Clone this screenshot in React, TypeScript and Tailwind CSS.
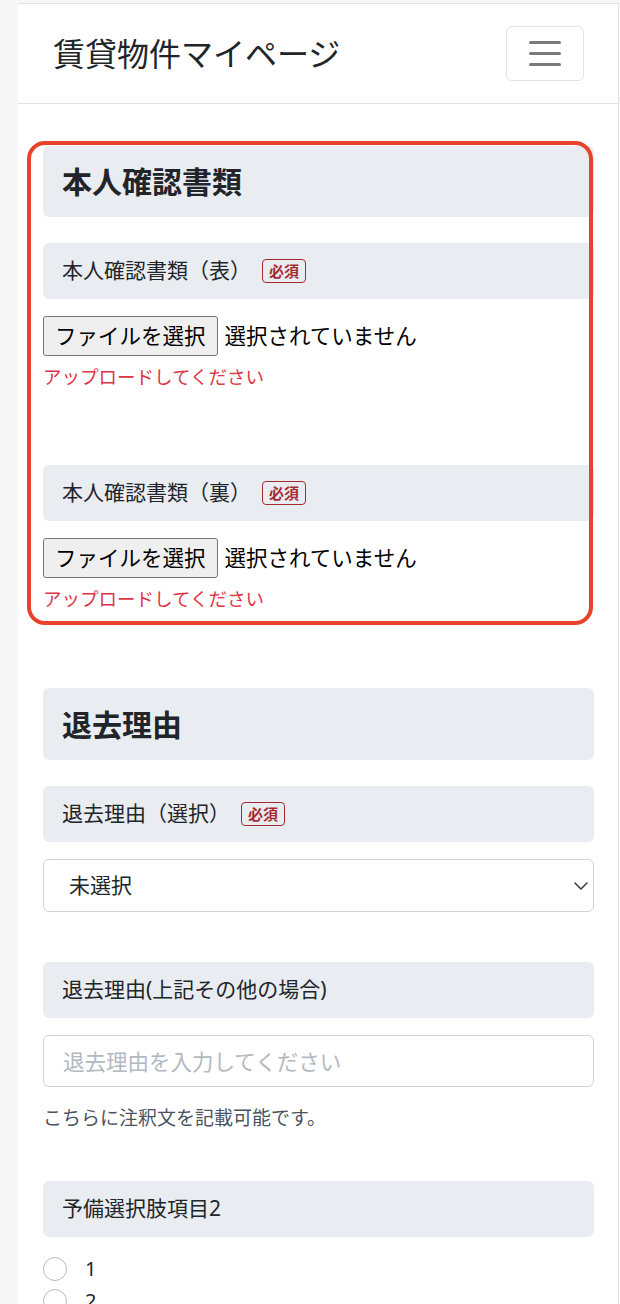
import { ChevronDown } from 'lucide-react';

const font = "font-['Noto_Sans','Noto_Sans_CJK_JP',sans-serif]";

function Required() {
  return (
    <span className="ml-[11px] inline-flex h-[24px] items-center rounded-[4px] border-[1.5px] border-[#a52a32] px-[6px] text-[15px] font-bold leading-none text-[#a52a32]">
      必須
    </span>
  );
}

function FieldLabel({ text, required }: { text: string; required?: boolean }) {
  return (
    <div className="flex h-[56px] items-center rounded-[6px] bg-[#e9ecf0] px-[19px] text-[21px] text-[#212529]">
      <span>{text}</span>
      {required && <Required />}
    </div>
  );
}

function SectionHeading({ text, tall }: { text: string; tall?: boolean }) {
  return (
    <div
      className={`flex items-center rounded-[6px] bg-[#e9ecf0] px-[19px] text-[30px] font-bold text-[#212529] ${
        tall ? 'h-[72px]' : 'h-[71px]'
      }`}
    >
      {text}
    </div>
  );
}

function FilePicker() {
  return (
    <div className="mt-[17px] flex h-[40px] items-center">
      <button
        type="button"
        className="flex h-[40px] items-center rounded-[3px] border border-[#767676] bg-[#efefef] px-[11px] text-[21.5px] text-black"
      >
        ファイルを選択
      </button>
      <span className="ml-[7px] text-[21.5px] text-black">選択されていません</span>
    </div>
  );
}

function UploadError() {
  return <p className="mt-[7px] text-[18.5px] leading-[27px] text-[#dc3545]">アップロードしてください</p>;
}

export default function App() {
  return (
    <div className={`min-h-screen bg-[#f7f7f7] pt-[3px] pl-[18px] pr-[1px] ${font}`}>
      <div className="min-h-[1301px] border-t border-r border-[#e2e2e2] bg-white">
        <header className="flex h-[100px] items-center justify-between border-b border-[#dee2e6] pl-[35px] pr-[34px]">
          <span className="text-[32px] leading-none text-[#212529]">賃貸物件マイページ</span>
          <button
            type="button"
            className="flex h-[55px] w-[78px] flex-col items-center justify-center gap-[8px] rounded-[6px] border border-[#e3e3e3]"
          >
            <span className="h-[3px] w-[32px] rounded-full bg-[#7a7a7a]" />
            <span className="h-[3px] w-[32px] rounded-full bg-[#7a7a7a]" />
            <span className="h-[3px] w-[32px] rounded-full bg-[#7a7a7a]" />
          </button>
        </header>

        <main className="pl-[25px] pr-[24px] pt-[42px]">
          {/* 本人確認書類 */}
          <section className="relative">
            <SectionHeading text="本人確認書類" />

            <div className="mt-[26px]">
              <FieldLabel text="本人確認書類（表）" required />
              <FilePicker />
              <UploadError />
            </div>

            <div className="mt-[75px]">
              <FieldLabel text="本人確認書類（裏）" required />
              <FilePicker />
              <UploadError />
            </div>

            <div className="pointer-events-none absolute top-[-5px] right-[1px] bottom-[-13px] left-[-16px] rounded-[18px] border-[4px] border-[#e8432a]" />
          </section>

          {/* 退去理由 */}
          <section className="mt-[76px]">
            <SectionHeading text="退去理由" tall />

            <div className="mt-[26px]">
              <FieldLabel text="退去理由（選択）" required />
              <div className="relative mt-[17px]">
                <select
                  defaultValue=""
                  className="h-[53px] w-full appearance-none rounded-[6px] border border-[#ced4da] bg-white pl-[25px] text-[21px] text-[#212529] outline-none"
                >
                  <option value="">未選択</option>
                </select>
                <ChevronDown
                  className="pointer-events-none absolute right-[1px] top-1/2 h-[24px] w-[24px] -translate-y-1/2 text-[#343a40]"
                  strokeWidth={1.5}
                />
              </div>
            </div>

            <div className="mt-[50px]">
              <FieldLabel text="退去理由(上記その他の場合)" />
              <input
                type="text"
                placeholder="退去理由を入力してください"
                className="mt-[17px] h-[52px] w-full rounded-[6px] border border-[#ced4da] pl-[19px] text-[21.5px] text-[#212529] outline-none placeholder:text-[#b3b9c0]"
              />
              <p className="mt-[18px] text-[19px] leading-[27px] text-[#4a5361]">こちらに注釈文を記載可能です。</p>
            </div>

            <div className="mt-[49px]">
              <FieldLabel text="予備選択肢項目2" />
              <div className="mt-[16px]">
                {['1', '2'].map((v) => (
                  <label key={v} className="flex h-[32px] items-center gap-[18px] text-[20px] text-[#212529]">
                    <input
                      type="radio"
                      name="yobi2"
                      value={v}
                      className="h-[24px] w-[24px] appearance-none rounded-full border-[1.5px] border-[#b5bac0] bg-white"
                    />
                    <span>{v}</span>
                  </label>
                ))}
              </div>
            </div>
          </section>
        </main>
      </div>
    </div>
  );
}
